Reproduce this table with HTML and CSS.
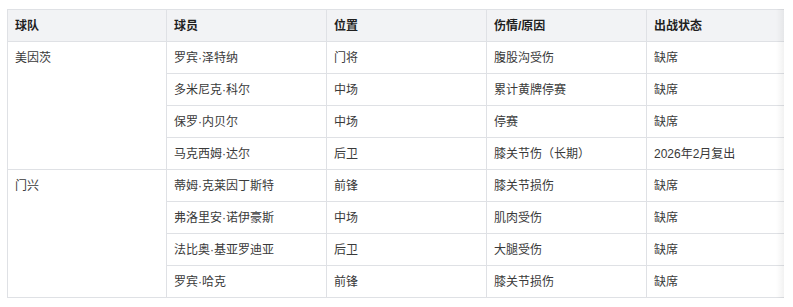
FILE: index.html
```html
<!DOCTYPE html>
<html lang="zh-CN">
<head>
<meta charset="utf-8">
<title>伤停名单</title>
<link rel="stylesheet" href="styles.css">
</head>
<body>
<div class="page">
  <div class="scroller">
    <table class="injuries">
      <colgroup>
        <col class="col-first">
        <col class="col">
        <col class="col">
        <col class="col">
        <col class="col">
      </colgroup>
      <thead>
        <tr>
          <th>球队</th>
          <th>球员</th>
          <th>位置</th>
          <th>伤情/原因</th>
          <th>出战状态</th>
        </tr>
      </thead>
      <tbody>
        <tr>
          <td rowspan="4" class="team">美因茨</td>
          <td>罗宾·泽特纳</td>
          <td>门将</td>
          <td>腹股沟受伤</td>
          <td>缺席</td>
        </tr>
        <tr>
          <td>多米尼克·科尔</td>
          <td>中场</td>
          <td>累计黄牌停赛</td>
          <td>缺席</td>
        </tr>
        <tr>
          <td>保罗·内贝尔</td>
          <td>中场</td>
          <td>停赛</td>
          <td>缺席</td>
        </tr>
        <tr>
          <td>马克西姆·达尔</td>
          <td>后卫</td>
          <td>膝关节伤（长期）</td>
          <td>2026年2月复出</td>
        </tr>
        <tr>
          <td rowspan="4" class="team">门兴</td>
          <td>蒂姆·克莱因丁斯特</td>
          <td>前锋</td>
          <td>膝关节损伤</td>
          <td>缺席</td>
        </tr>
        <tr>
          <td>弗洛里安·诺伊豪斯</td>
          <td>中场</td>
          <td>肌肉受伤</td>
          <td>缺席</td>
        </tr>
        <tr>
          <td>法比奥·基亚罗迪亚</td>
          <td>后卫</td>
          <td>大腿受伤</td>
          <td>缺席</td>
        </tr>
        <tr>
          <td>罗宾·哈克</td>
          <td>前锋</td>
          <td>膝关节损伤</td>
          <td>缺席</td>
        </tr>
      </tbody>
    </table>
    <div class="fade"></div>
  </div>
</div>
</body>
</html>
```

FILE: styles.css
```css
html, body {
  margin: 0;
  padding: 0;
  background: #ffffff;
}

body {
  font-family: "Liberation Sans", "Noto Sans CJK SC", sans-serif;
  font-size: 12px;
  color: #3a3a3a;
}

.page {
  padding: 9px 9px 0 7px;
}

.scroller {
  position: relative;
  width: 777px;
  overflow: hidden;
}

.injuries {
  border-collapse: collapse;
  table-layout: fixed;
  width: 800px;
}

.col-first {
  width: 159px;
}

.col {
  width: 160px;
}

.injuries th,
.injuries td {
  border: 1px solid #dfe1e5;
  height: 32px;
  padding: 0 0 0 7px;
  text-align: left;
  vertical-align: middle;
  line-height: 16px;
  box-sizing: border-box;
}

.injuries th {
  background: #f2f3f5;
  font-weight: 700;
  color: #1f1f1f;
}

.injuries td.team {
  vertical-align: top;
  padding-top: 8px;
}

.fade {
  position: absolute;
  top: 0;
  right: 0;
  bottom: 0;
  width: 8px;
  background: linear-gradient(to right, rgba(0, 0, 0, 0), rgba(0, 0, 0, 0.05));
  pointer-events: none;
}
```
